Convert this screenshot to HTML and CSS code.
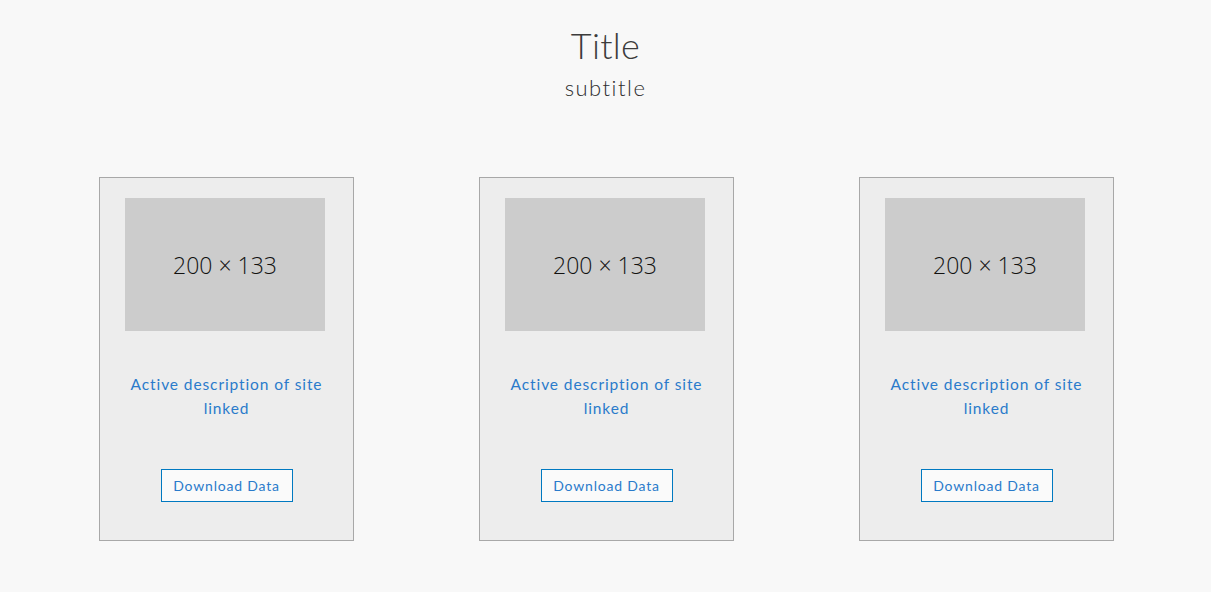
FILE: index.html
```html
<!DOCTYPE html>
<html>
<head>
<meta charset="utf-8">
<link rel="stylesheet" href="styles.css">
</head>
<body>
<header class="head">
  <h1 class="title">Title</h1>
  <h2 class="subtitle">subtitle</h2>
</header>
<main class="cards">
  <div class="card">
    <div class="thumb">200 × 133</div>
    <a class="desc" href="#">Active description of site linked</a>
    <button class="btn">Download Data</button>
  </div>
  <div class="card">
    <div class="thumb">200 × 133</div>
    <a class="desc" href="#">Active description of site linked</a>
    <button class="btn">Download Data</button>
  </div>
  <div class="card">
    <div class="thumb">200 × 133</div>
    <a class="desc" href="#">Active description of site linked</a>
    <button class="btn">Download Data</button>
  </div>
</main>
</body>
</html>
```
FILE: styles.css
```css
html, body {
  margin: 0;
  padding: 0;
  background: #f8f8f8;
}
body {
  font-family: Lato, "Open Sans", sans-serif;
  color: #4c4c4c;
}
.head {
  text-align: center;
  padding-top: 23px;
}
.title {
  margin: 0;
  font-weight: 300;
  font-size: 36px;
  line-height: 44px;
  color: #3c3c3c;
  letter-spacing: 0.3px;
}
.subtitle {
  margin: 5px 0 0;
  font-weight: 300;
  font-size: 22px;
  line-height: 32px;
  color: #2e2e2e;
  letter-spacing: 1.5px;
}
.cards {
  display: flex;
  justify-content: center;
  gap: 125px;
  margin-top: 73px;
  padding-left: 2px;
}
.card {
  width: 253px;
  height: 342px;
  box-sizing: content-box;
  border: 1px solid #a8a8a8;
  background: #ededed;
  display: flex;
  flex-direction: column;
  align-items: center;
  padding-top: 20px;
}
.thumb {
  width: 200px;
  height: 133px;
  background: #cccccc;
  display: flex;
  align-items: center;
  justify-content: center;
  font-family: "Open Sans", sans-serif;
  font-weight: 300;
  font-size: 23px;
  color: #111;
  margin-left: -3px;
}
.desc {
  margin-top: 41px;
  width: 210px;
  text-align: center;
  font-size: 15.5px;
  font-weight: 400;
  line-height: 24px;
  color: #2a7bcb;
  text-decoration: none;
  letter-spacing: 0.9px;
}
.btn {
  margin-top: 49px;
  width: 132px;
  height: 33px;
  border: 1px solid #0079c1;
  background: #fafafa;
  color: #2a7bcb;
  font-family: Lato, "Open Sans", sans-serif;
  font-size: 14px;
  font-weight: 400;
  letter-spacing: 0.8px;
  padding: 0;
  cursor: pointer;
}
```
